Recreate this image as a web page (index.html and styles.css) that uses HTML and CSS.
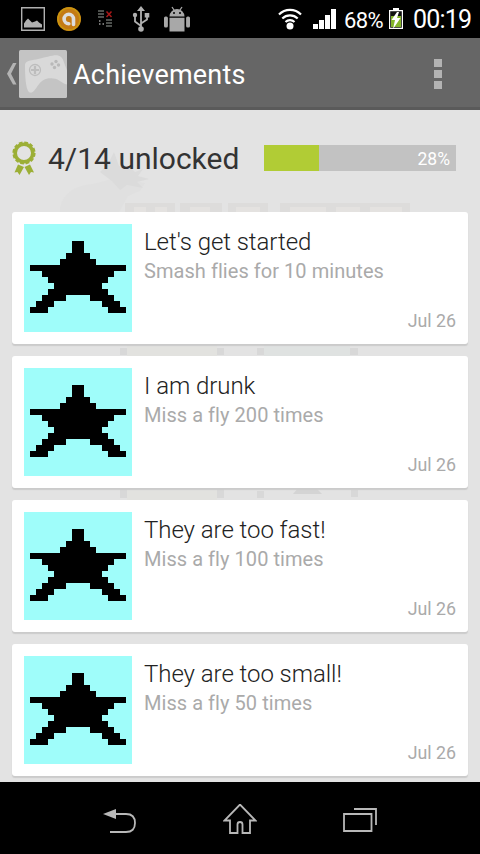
FILE: index.html
```html
<!DOCTYPE html>
<html lang="en">
<head>
<meta charset="utf-8">
<title>Achievements</title>
<link rel="stylesheet" href="styles.css">
</head>
<body>
<svg class="defs" width="0" height="0">
  <symbol id="star" viewBox="0 0 108 108">
    <path d="M48 17h12v12h6v6h6v6h30v6h-12v6h-6v6h-6v6h6v6h6v6h6v6h6v6h-18v-6h-6v-6h-12v-6h-24v6h-12v6h-6v6h-18v-6h6v-6h6v-6h6v-6h6v-6h-6v-6h-6v-6h-12v-6h30v-6h6v-6h6z"/>
  </symbol>
</svg>
<header class="status">
  <div class="notifications">
    <svg width="24" height="24" viewBox="0 0 24 24"><path d="M.7.7h22.6v22.6H.7z" fill="none" stroke="#b0b0b0" stroke-width="1.400"/><path d="M3 20.500v-4l2-3 2-2 2 2 2 2 3-1 2-1 2 2 3 2v3z" fill="#b0b0b0"/></svg>
    <svg width="24" height="24" viewBox="0 0 24 24"><circle cx="12" cy="12" r="12" fill="#c47a14"/><circle cx="12" cy="12" r="11" fill="none" stroke="#c9960f" stroke-width="1.500"/><path d="M16.500 17.500V12a4.700 4.700 0 1 0-4.700 4.700" fill="none" stroke="#ddd" stroke-width="3.600" stroke-linecap="round"/></svg>
    <svg width="24" height="24" viewBox="0 0 24 24"><path d="M5 4.500h6M5 7.500h6M5 10.500h6M13 13.500h6M13 16.500h6M13 19.500h6" transform="translate(0 -.500)" stroke="#9a9f9a" stroke-width="1.200"/><path d="M13.500 4.500l5 5.500m0-5.500l-5 5.500" stroke="#a81818" stroke-width="1.500"/><path d="M6 14h1.500M6 17h1.500m2 0H11" stroke="#999" stroke-width="1.300"/></svg>
    <svg width="24" height="26" viewBox="0 0 24 26"><path d="M10 3v20M10 20l-6-4.500V9M10 17.500l6-4V9" transform="translate(2 0)" fill="none" stroke="#b0b0b0" stroke-width="1.800"/><path d="M12 0l4 5H8zM15.700 7h4.600v4.500h-4.600z" fill="#b0b0b0"/><circle cx="6" cy="9" r="2.200" fill="#b0b0b0"/><circle cx="12" cy="23" r="2.800" fill="#b0b0b0"/></svg>
    <svg class="droid" width="26" height="26" viewBox="0 0 26 26" fill="#a8a8a8"><path d="M5.500 10.500a7.500 7.500 0 0 1 15 0zM5.500 11.700h15V25.500h-15z"/><rect y="10.500" width="3.900" height="11" rx="1.500"/><rect x="22.100" y="10.500" width="3.900" height="11" rx="1.500"/><path d="M8 1l2 3M18 1l-2 3" stroke="#a8a8a8" stroke-width="1.300"/><circle cx="10" cy="7" r="1" fill="#000"/><circle cx="16" cy="7" r="1" fill="#000"/></svg>
  </div>
  <div class="system">
    <svg class="wifi" width="24" height="22" viewBox="0 0 24 22"><g fill="none" stroke="#fff" stroke-width="2.200"><path d="M1 6.500a15.500 15.500 0 0 1 22 0M4.300 10.500a11 11 0 0 1 15.400 0M7.500 14a6.500 6.500 0 0 1 9 0"/></g><circle cx="12" cy="18" r="3.500" fill="#fff"/></svg>
    <svg class="signal" width="23" height="20" viewBox="0 0 23 20"><path d="M0 15h5v5H0zM6 11h5v9H6zM12 6h5v14h-5zM18 0h5v20h-5z" fill="#fff"/></svg>
    <span class="percent">68%</span>
    <svg class="battery" width="14" height="22" viewBox="0 0 14 22"><path d="M4 0h6v2H4z" fill="#fff"/><path d="M.6 2.600h12.800v17.800H.6z" fill="#111" stroke="#fff" stroke-width="1.200"/><path d="M2 8h10v11H2z" fill="#84b52b"/><path d="M8 4L2.500 12H6l-2 9 7.500-11H8l2-6z" fill="#fff"/></svg>
    <span class="clock">00:19</span>
  </div>
</header>
<div class="actionbar">
  <svg class="up" width="10" height="22" viewBox="0 0 10 22"><path d="M9.500 0H6L0 10.700 6 21.500h3.500L4 10.700z" fill="#b3b3b3"/></svg>
  <svg class="app" width="48" height="48" viewBox="0 0 48 48"><rect width="48" height="48" rx="1.500" fill="#c4c4c4"/><path d="M6 14.500c1-4 5-4 11-5 10-2 18-5 22-4 3 .5 5 3 6 7l3 8v14c-5-1-8-6-14-6-6-1-11 1-15 7-3 4-5 8-8 7-4-1-5-15-5-28z" fill="#d9d9d9"/><g fill="none" stroke="#bdbdbd"><circle cx="16" cy="20" r="5.500" stroke-width="1.300"/><path d="M16 16v8m-4-4h8" stroke-width="2.200"/></g><g fill="#b9b9b9"><circle cx="37" cy="11.500" r="1.700"/><circle cx="33" cy="14" r="1.700"/><circle cx="39.500" cy="15" r="1.700"/><circle cx="35.500" cy="17.500" r="1.700"/></g></svg>
  <h1>Achievements</h1>
  <div class="overflow"><i></i><i></i><i></i></div>
</div>
<main>
  <svg class="watermark" width="480" height="672" viewBox="0 110 480 672">
    <path d="M60 212c0-14 10-24 25-27 15-2 22-5 30-7l30 5-5 8-12 5-9 16z" fill="#e0e0e0"/>
    <path d="M100 172l8-8 6-12 5 14 12 2 4 4 8-3-5 7 11 3-12 3 6 6-16-3-7 5-8-9z" fill="#dbdbdb"/>
    <path d="M125 203h50v9h-50zM180 203h42v9h-42zM228 203h40v9h-40zM280 203h130v9H280z" fill="#dddcdb"/>
    <path d="M134 207h12v5h-12zM155 207h12v5h-12zM190 207h20v5h-20zM236 207h24v5h-24zM290 207h36v5h-36zM336 207h24v5h-24zM370 207h32v5h-32z" fill="#e4e2e0"/>
    <path d="M120 348h7v7h-7zM217 348h7v7h-7zM257 348h7v7h-7zM350 348h8v7h-8zM120 488h7v10h-7zM217 488h7v10h-7zM257 491h7v7h-7zM351 490h7v7h-7z" fill="#d8d8d8"/>
    <path d="M264 344h86v12h-86z" fill="#dfe2e1"/><path d="M127 344h90v12h-90zM127 488h90v12h-90z" fill="#e2e2df"/><path d="M298 488h18l6 6h-29z" fill="#d4d4d4"/>
  </svg>
  <section class="summary">
    <svg width="25" height="35" viewBox="0 0 25 35"><path d="M6 23.500l6 2.500-4.500 8-2-3-3 .5zM18 23.500l-5.500 2.500 4.500 8 2-3 3 .5z" fill="#9caf36"/><circle cx="12" cy="12" r="8.800" fill="none" stroke="#9caf36" stroke-width="3.600"/><circle cx="12" cy="12" r="10.800" fill="none" stroke="#9caf36" stroke-width="1.600" stroke-dasharray="3.800 1.850"/></svg>
    <h2>4/14 unlocked</h2>
    <div class="progress"><div class="fill"></div><span>28%</span></div>
  </section>
  <section class="list">
    <article class="card"><svg class="thumb"><use href="#star"/></svg><div class="info"><h3>Let's get started</h3><p>Smash flies for 10 minutes</p><time>Jul 26</time></div></article>
    <article class="card"><svg class="thumb"><use href="#star"/></svg><div class="info"><h3>I am drunk</h3><p>Miss a fly 200 times</p><time>Jul 26</time></div></article>
    <article class="card"><svg class="thumb"><use href="#star"/></svg><div class="info"><h3>They are too fast!</h3><p>Miss a fly 100 times</p><time>Jul 26</time></div></article>
    <article class="card"><svg class="thumb"><use href="#star"/></svg><div class="info"><h3>They are too small!</h3><p>Miss a fly 50 times</p><time>Jul 26</time></div></article>
  </section>
</main>
<nav class="navbar">
  <svg width="34" height="32" viewBox="0 0 34 32"><path d="M12 10h11q9 0 9 9t-9 9H7" fill="none" stroke="#b8b8b8" stroke-width="1.800"/><path d="M0 10l13-5v10z" fill="#b8b8b8"/></svg>
  <svg width="34" height="32" viewBox="0 0 34 32"><path d="M17 -.500L1.500 15.500H7V28h7.500V19.500a2.500 2.500 0 0 1 5 0V28H27V15.500h5.500z" transform="translate(0 1)" fill="none" stroke="#b8b8b8" stroke-width="1.800"/></svg>
  <svg width="34" height="28" viewBox="0 0 34 28"><path d="M1 8h27.500v17H1zM11 3h22v16" fill="none" stroke="#b8b8b8" stroke-width="1.800"/></svg>
</nav>
</body>
</html>
```
FILE: styles.css
```css
* { box-sizing: border-box; margin: 0; padding: 0; }
body { width: 480px; height: 854px; overflow: hidden; display: flex; flex-direction: column; background: #000; font-family: Roboto, "Liberation Sans", sans-serif; }
.defs { position: absolute; }
svg { display: block; flex: none; }
.status { height: 38px; flex: none; display: flex; justify-content: space-between; align-items: center; padding: 0 8px 0 21px; color: #fff; }
.notifications { display: flex; gap: 12px; align-items: center; }
.droid { margin-left: -1px; }
.system { display: flex; align-items: center; }
.signal { margin-left: 11px; }
.percent { font-size: 22px; margin-left: 8px; padding-top: 2px; width: 39px; letter-spacing: -.6px; }
.battery { margin-left: 6px; }
.clock { font-size: 25px; margin-left: 10px; padding-top: 1px; width: 59px; letter-spacing: -.8px; }
.actionbar { height: 72px; flex: none; display: flex; align-items: center; background: #666; border-bottom: 3px solid #5a5a5a; padding: 2px 38px 0 7px; }
.up { margin-right: 2px; }
h1 { margin-left: 6px; padding-top: 2px; font-size: 27px; font-weight: 400; color: #fff; letter-spacing: .2px; }
.overflow { display: grid; gap: 3px; margin-left: auto; }
.overflow i { width: 8px; height: 8px; background: #b3b3b3; }
main { position: relative; height: 672px; flex: none; background: #e3e3e3; overflow: hidden; padding: 0 12px; }
.watermark { position: absolute; left: 0; top: 0; }
.summary { position: relative; height: 102px; display: flex; align-items: center; padding: 0 12px 6px 0; }
h2 { margin-left: 11px; font-size: 30px; font-weight: 400; color: #333; white-space: nowrap; }
.progress { margin-left: auto; width: 192px; height: 26px; background: #c2c2c2; display: flex; justify-content: space-between; align-items: center; padding-right: 6px; color: #fff; font-size: 17.5px; }
.progress span { padding-top: 2px; }
.fill { width: 55px; height: 100%; background: #b1cc35; }
.list { position: relative; display: grid; gap: 12px; }
.card { height: 132px; display: flex; gap: 12px; padding: 12px; background: #fff; border-radius: 3px; box-shadow: 0 2px 1px #cbcbcb; }
.thumb { width: 108px; height: 108px; background: #9ffdfa; }
.info { flex: 1; display: flex; flex-direction: column; }
h3 { height: 36px; line-height: 36px; font-size: 24px; font-weight: 300; letter-spacing: -.05px; color: #222; white-space: nowrap; }
.info p { line-height: 22px; font-size: 20px; letter-spacing: .05px; color: #aaa; white-space: nowrap; }
time { margin-top: auto; align-self: flex-end; line-height: 22px; font-size: 17.8px; color: #aaa; }
.navbar { height: 72px; flex: none; display: flex; justify-content: center; align-items: center; gap: 86px; padding-top: 4px; }
```
